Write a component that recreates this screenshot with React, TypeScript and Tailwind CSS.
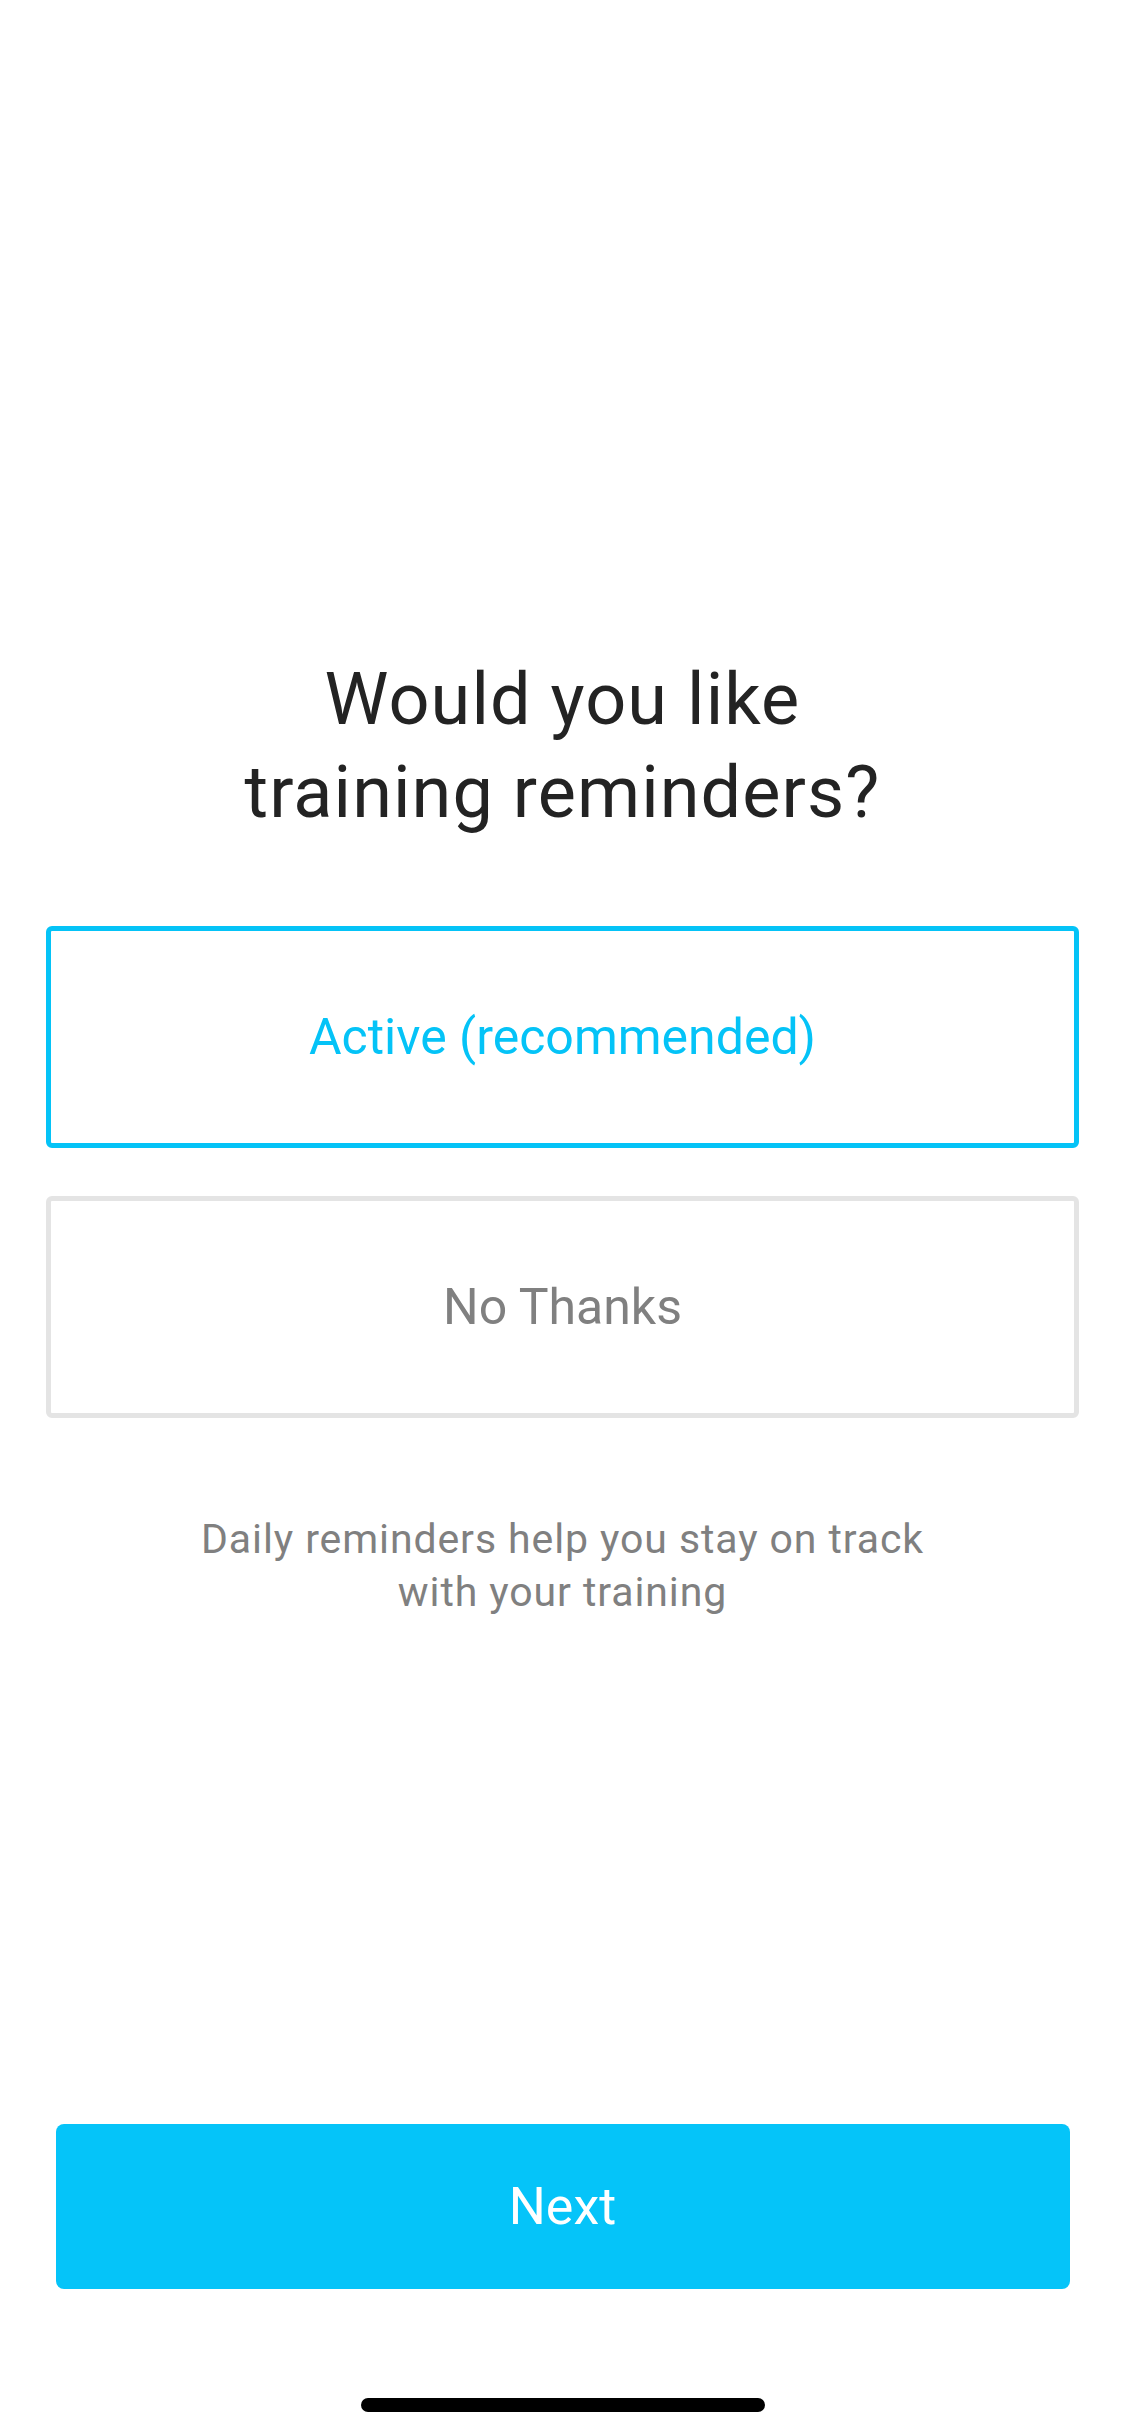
const font = { fontFamily: "Roboto, 'Noto Sans', Arial, sans-serif" };

function Option({
  label,
  active,
}: {
  label: string;
  active?: boolean;
}) {
  return (
    <button
      className={
        active
          ? "mx-[46px] flex h-[222px] items-center justify-center rounded-[6px] border-[5px] border-[#04c3f7] bg-white text-[50px] text-[#04c3f7]"
          : "mx-[46px] flex h-[222px] items-center justify-center rounded-[6px] border-[5px] border-[#e4e4e4] bg-white text-[50px] text-[#808080]"
      }
    >
      {label}
    </button>
  );
}

export default function App() {
  return (
    <div
      className="flex min-h-[2436px] w-[1125px] flex-col bg-white"
      style={font}
    >
      <h1 className="pt-[653px] text-center text-[72px] leading-[93px] font-normal tracking-[0.015em] text-[#232323]">
        Would you like
        <br />
        training reminders?
      </h1>

      <div className="mt-[87px] flex flex-col gap-[48px]">
        <Option label="Active (recommended)" active />
        <Option label="No Thanks" />
      </div>

      <p className="mt-[95px] text-center text-[41px] leading-[53px] tracking-[0.9px] text-[#808080]">
        Daily reminders help you stay on track
        <br />
        with your training
      </p>

      <div className="mt-auto flex flex-col items-center">
        <button className="flex h-[165px] w-[1014px] items-center justify-center rounded-[8px] bg-[#05c4f9] text-[52px] text-white">
          Next
        </button>
        <div className="mt-[109px] mb-[24px] h-[14px] w-[404px] rounded-full bg-black" />
      </div>
    </div>
  );
}
